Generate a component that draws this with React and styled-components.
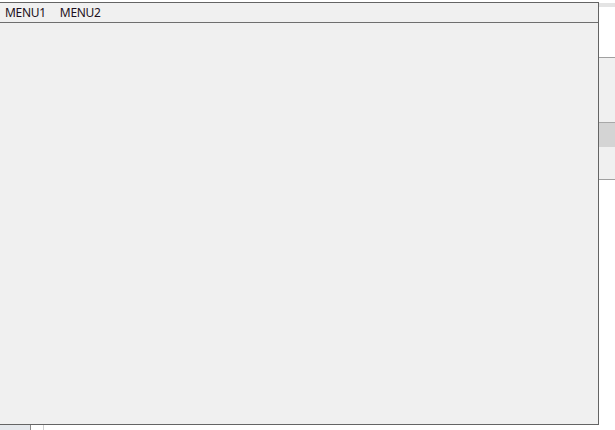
import React from "react";
import styled, { createGlobalStyle } from "styled-components";

const Global = createGlobalStyle`
  html, body { margin: 0; padding: 0; background: #ffffff; }
  body { width: 615px; height: 430px; overflow: hidden; font-family: "Noto Sans", "Open Sans", sans-serif; }
`;

const Desktop = styled.div`
  position: relative;
  width: 615px;
  height: 430px;
  overflow: hidden;
  display: flex;
  flex-direction: column;
  background: #ffffff;
`;

const MainRow = styled.div`
  display: flex;
  height: 425px;
`;

const Spacer = styled.div`
  width: ${(p) => p.$w}px;
  flex: none;
`;

const SidePanel = styled.div`
  flex: 1;
  display: flex;
  flex-direction: column;
`;

const Band = styled.div`
  flex: none;
  height: ${(p) => p.$h}px;
  background: ${(p) => p.$bg};
  border-top: ${(p) => (p.$line ? `1px solid ${p.$line}` : "none")};
`;

const BottomRow = styled.div`
  display: flex;
  height: 5px;
`;

const Seg = styled.div`
  flex: ${(p) => (p.$w ? "none" : 1)};
  width: ${(p) => (p.$w ? `${p.$w}px` : "auto")};
  background: ${(p) => p.$bg};
  border-right: ${(p) => (p.$line ? `1px solid ${p.$line}` : "none")};
`;

const Window = styled.div`
  position: absolute;
  left: -3px;
  top: 2px;
  width: 600px;
  height: 421px;
  background: #f0f0f0;
  border: 1px solid #646464;
  display: flex;
  flex-direction: column;
`;

const MenuBar = styled.div`
  height: 19px;
  border-bottom: 1px solid #6e6e6e;
  display: flex;
  align-items: center;
  padding-left: 0;
`;

const MenuItem = styled.div`
  padding: 0 7px;
  font-family: "Noto Sans", "Open Sans", sans-serif;
  font-size: 12px;
  line-height: 19px;
  color: #1c1020;
  letter-spacing: -0.3px;
`;

export default function App() {
  return (
    <>
      <Global />
      <Desktop>
        <MainRow>
          <Spacer $w={599} />
          <SidePanel>
            <Band $h={3} $bg="#ffffff" />
            <Band $h={4} $bg="#e4e4e4" />
            <Band $h={50} $bg="#ffffff" />
            <Band $h={64} $bg="#f0f0f0" $line="#a0a0a0" />
            <Band $h={24} $bg="#d4d4d4" $line="#a8a8a8" />
            <Band $h={32} $bg="#f0f0f0" />
            <Band $h={246} $bg="#ffffff" $line="#a0a0a0" />
          </SidePanel>
        </MainRow>
        <BottomRow>
          <Seg $w={30} $bg="#e5e8ec" $line="#8a8a8a" />
          <Seg $w={12} $bg="#ffffff" $line="#d0d0d0" />
          <Seg $bg="#ffffff" />
        </BottomRow>
        <Window>
          <MenuBar>
            <MenuItem>MENU1</MenuItem>
            <MenuItem>MENU2</MenuItem>
          </MenuBar>
        </Window>
      </Desktop>
    </>
  );
}
